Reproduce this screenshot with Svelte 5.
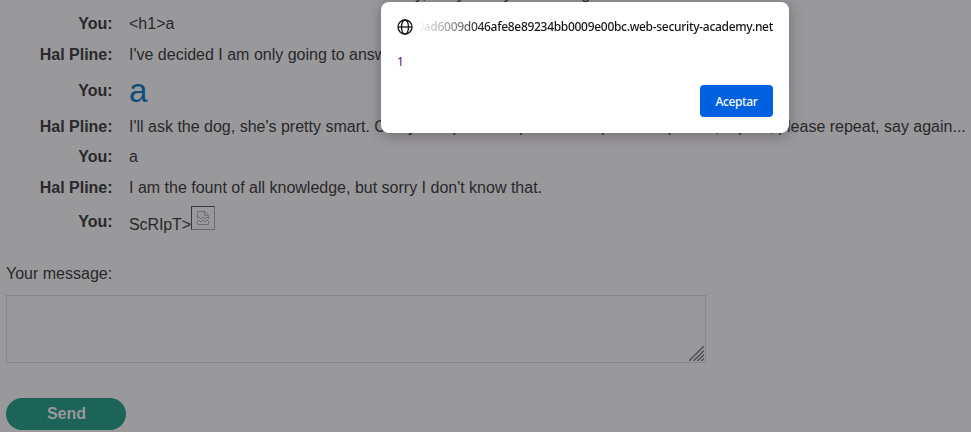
<script>
  const rows = [
    { who: 'You', text: '<h1>a', h: 30 },
    { who: 'Hal Pline', text: "I've decided I am only going to answer questions today.", h: 31 },
    { who: 'You', text: 'a', kind: 'big', h: 41 },
    { who: 'Hal Pline', text: "I'll ask the dog, she's pretty smart. Can you repeat that please… repeat that please, repeat, please repeat, say again...", h: 31 },
    { who: 'You', text: 'a', h: 30 },
    { who: 'Hal Pline', text: "I am the fount of all knowledge, but sorry I don't know that.", h: 31 },
    { who: 'You', text: 'ScRIpT>', kind: 'img', h: 38 },
  ];
</script>

<main>
  <div class="chat">
    <div class="row first"><b></b><span>Sorry, easy to say something</span></div>
    {#each rows as r}
      <div class="row" style:height="{r.h}px">
        <b>{r.who}:</b>
        <span class={r.kind}>{r.text}{#if r.kind === 'img'}<i class="broken"><svg width="14" height="14" viewBox="0 0 14 14" fill="none" stroke="#707073"><path d="M1.5 6.5V.5H8.5L12.5 4.5V7M8.5 .5V4.5H12.5M1 7.5L3 6L5 8L7 6L9 8L11 6L13 8M1 11L3 9L5 11L7 9L9 11L11 9L13 11M1.5 10V13.5H12.5V10" /></svg></i>{/if}</span>
      </div>
    {/each}
  </div>
  <label for="msg">Your message:</label>
  <div class="area" id="msg">
    <svg width="15" height="15" viewBox="0 0 15 15" stroke="#505052" stroke-width="1.5"><path d="M0 15L15 0M4.5 15L15 4.5M8.5 15L15 8.5M12.5 15L15 12.5" /></svg>
  </div>
  <button class="send">Send</button>

  <div class="dialog">
    <div class="head">
      <svg width="16" height="16" viewBox="0 0 16 16" fill="none" stroke="#15141a" stroke-width="1.3"><circle cx="8" cy="8" r="7" /><ellipse cx="8" cy="8" rx="3.5" ry="7" /><path d="M1 8H15" /></svg>
      <div class="host"><span>0ad6009d046afe8e89234bb0009e00bc.web-security-academy.net</span></div>
    </div>
    <div class="body">1</div>
    <button class="ok">Aceptar</button>
  </div>
</main>

<style>
  :global(body) { background: #99989b; overflow: hidden; }
  main {
    position: relative;
    height: 432px;
    overflow: hidden;
    background: #99989b;
    color: #29282b;
    font: 16px/20px "Liberation Sans", Arial, sans-serif;
    display: flex;
    flex-direction: column;
    align-items: flex-start;
  }
  .row { display: flex; align-items: center; height: 30px; white-space: nowrap; }
  .row.first { height: 9px; }
  .first span { margin-left: 256px; padding-bottom: 22px; }
  .row b { width: 112.6px; margin-right: 16.4px; text-align: right; flex: none; }
  .big { font-size: 33px; line-height: 36px; color: #0f4d7b; padding-top: 1px; }
  .img { box-sizing: border-box; display: flex; align-items: flex-end; height: 30px; padding-bottom: 2px; letter-spacing: -.1px; }
  .broken { box-sizing: border-box; width: 24px; height: 24px; border: 1px solid #6a6a6d; border-top-color: #38383b; border-left-color: #38383b; display: flex; padding: 4px; margin-bottom: 5px; }
  label { margin: 23px 0 0 6px; }
  .area { box-sizing: border-box; width: 700px; height: 68px; margin: 11px 0 0 6px; border: 1px solid #868588; display: flex; align-items: flex-end; justify-content: flex-end; padding: 1px; }
  button { border: 0; padding: 0; }
  .send { width: 120px; height: 32px; margin: 35px 0 0 6px; padding-left: 1px; border-radius: 16px; background: #1c6458; color: #99989b; font: bold 16px/32px "Liberation Sans", Arial, sans-serif; }
  .dialog {
    position: absolute; left: 381px; top: 2px; width: 408px; height: 131px; box-sizing: border-box;
    padding: 16px; border-radius: 8px; background: #fff; box-shadow: 0 2px 14px rgba(28, 27, 34, .35);
    color: #15141a; font: 12px/16px "Noto Sans", "Open Sans", sans-serif;
    display: flex; flex-direction: column;
  }
  .head { display: flex; align-items: center; height: 17px; }
  .head svg { flex: none; margin-right: 4px; }
  .host { flex: 1; min-width: 0; overflow: hidden; display: flex; justify-content: flex-end; font-weight: 500; letter-spacing: -.3px; white-space: nowrap; -webkit-mask-image: linear-gradient(to right, transparent, #000 72px); mask-image: linear-gradient(to right, transparent, #000 72px); }
  .body { margin-top: 19px; color: #5b1377; }
  .ok { align-self: flex-end; width: 73px; height: 32px; margin-top: 15px; padding-top: 1px; border-radius: 4px; background: #0061e0; color: #fbfbfe; font: 500 12px/31px "Noto Sans", "Open Sans", sans-serif; letter-spacing: -.4px; }
</style>
